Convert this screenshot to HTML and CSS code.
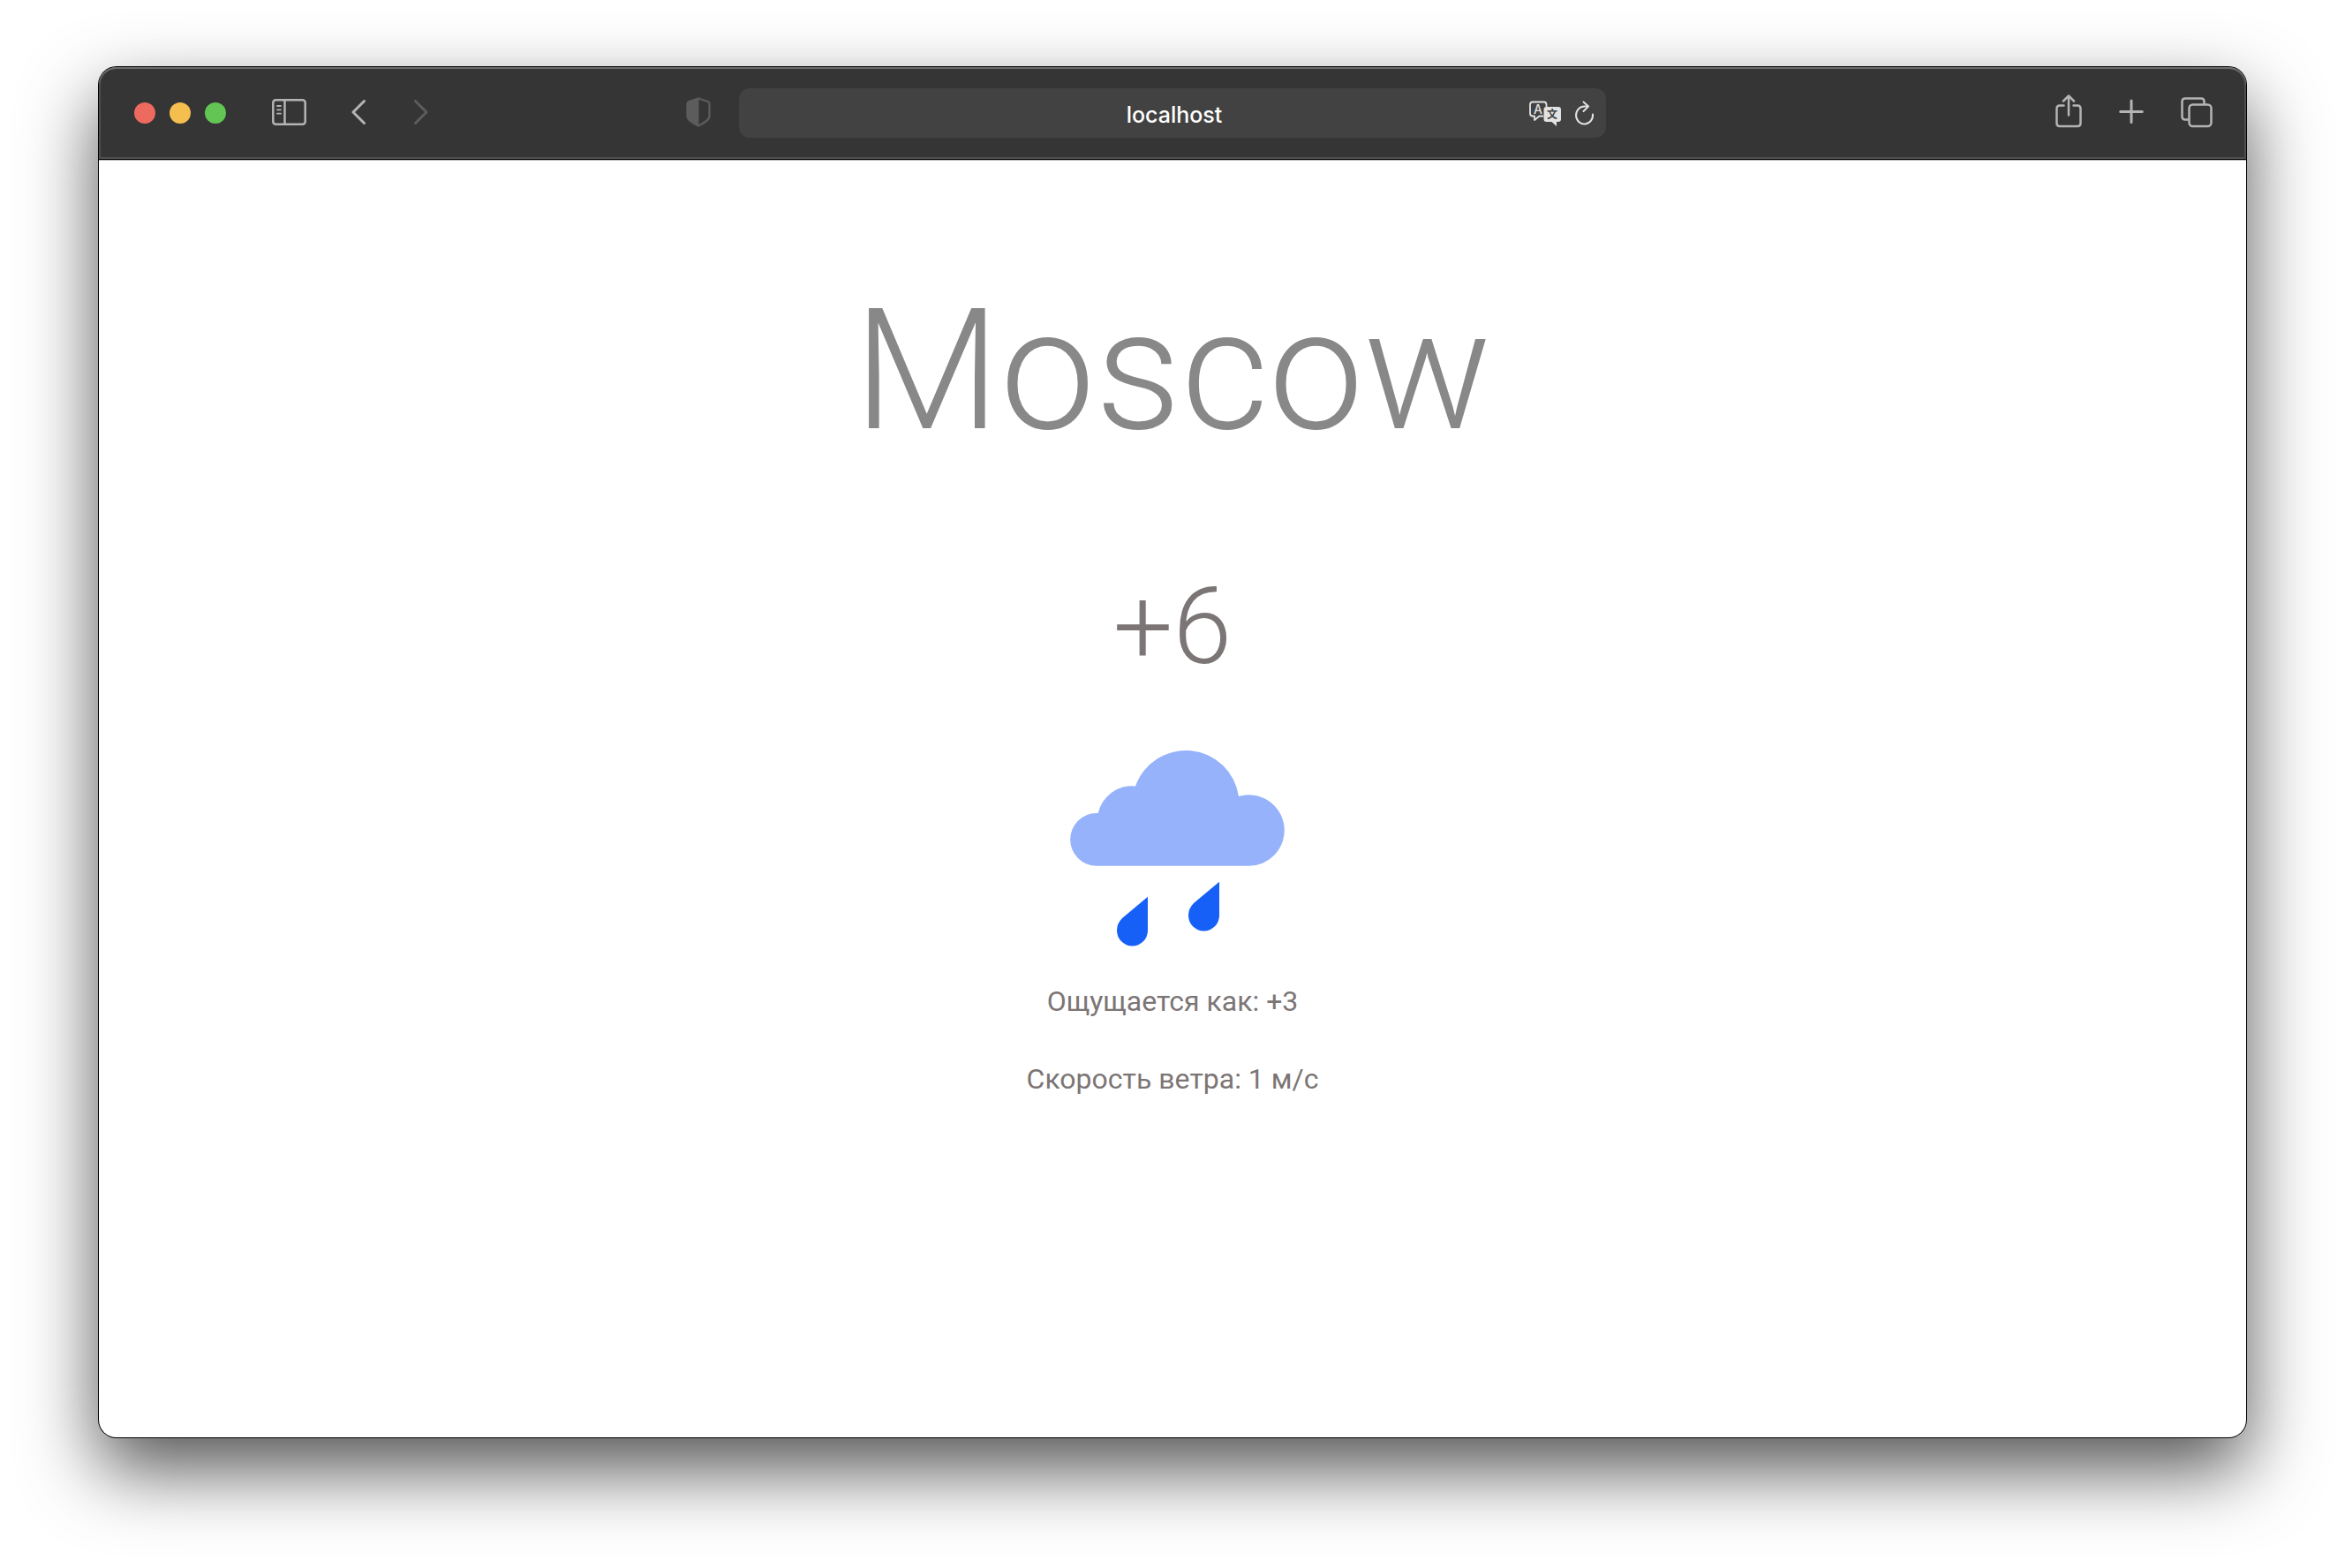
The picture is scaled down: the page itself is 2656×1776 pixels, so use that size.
FILE: index.html
```html
<!DOCTYPE html>
<html lang="ru">
<head>
  <meta charset="utf-8">
  <meta name="viewport" content="width=device-width, initial-scale=1">
  <title>localhost</title>
  <link rel="stylesheet" href="styles.css">
</head>
<body>
  <div class="window">
    <header class="toolbar">
      <div class="toolbar-start">
        <div class="lights">
          <button class="light light-close" type="button" aria-label="Close"></button>
          <button class="light light-minimize" type="button" aria-label="Minimize"></button>
          <button class="light light-zoom" type="button" aria-label="Zoom"></button>
        </div>
        <button class="tool tool-sidebar" type="button" aria-label="Sidebar">
          <svg width="40" height="32" viewBox="0 0 40 32" fill="none" stroke="currentColor" stroke-width="2.500">
            <rect x="1.300" y="2.300" width="36.400" height="27.500" rx="3"/>
            <path d="M14.500 2v28"/>
            <path d="M6 9h4M6 13.300h4M6 17.700h4" stroke-width="1.800" stroke-linecap="round"/>
          </svg>
        </button>
        <div class="history">
          <button class="tool" type="button" aria-label="Back">
            <svg width="18" height="30" viewBox="0 0 18 30" fill="none" stroke="currentColor" stroke-width="3" stroke-linecap="round" stroke-linejoin="round"><path d="M14.500 2.500L2 15l12.500 12.500"/></svg>
          </button>
          <button class="tool tool-dim" type="button" aria-label="Forward" disabled>
            <svg width="18" height="30" viewBox="0 0 18 30" fill="none" stroke="currentColor" stroke-width="3" stroke-linecap="round" stroke-linejoin="round"><path d="M2.500 2.500L15 15 2.500 27.500"/></svg>
          </button>
        </div>
        <button class="tool tool-dim tool-shield" type="button" aria-label="Privacy report">
          <svg width="28" height="34" viewBox="0 0 28 34">
            <path d="M14 1.500L3.500 5Q1.500 5.700 1.500 8v13q0 3.500 3.500 6 4 3.200 9 5.500 5-2.300 9-5.500 3.500-2.500 3.500-6V8q0-2.300-2-3z" fill="none" stroke="currentColor" stroke-width="2.300"/>
            <path d="M14.500 1.500L3.500 5Q1.500 5.700 1.500 8v13q0 3.500 3.500 6 4 3.200 9.500 5.500z" fill="currentColor"/>
          </svg>
        </button>
      </div>

      <div class="address">
        <input class="address-input" type="text" value="localhost" aria-label="Address">
        <div class="address-actions">
          <button class="tool tool-bright" type="button" aria-label="Translate">
            <svg width="38" height="30" viewBox="0 0 38 30">
              <path d="M17 18.500h-4.500L7 23v-4.500H5Q2 18.500 2 15.500V5.500Q2 2.500 5 2.500h12.500Q20.500 2.500 20.500 5.500V8" fill="none" stroke="currentColor" stroke-width="1.800" stroke-linejoin="round"/>
              <path d="M20.500 8h13.500Q37 8 37 11v11q0 3-3 3h-2v5l-5.500-5h-6q-3 0-3-3V11q0-3 3-3z" fill="currentColor"/>
              <text class="glyph-latin" x="11" y="16" text-anchor="middle">A</text>
              <text class="glyph-han" x="27" y="21" text-anchor="middle">文</text>
            </svg>
          </button>
          <button class="tool tool-bright" type="button" aria-label="Reload">
            <svg width="24" height="28" viewBox="0 0 24 28" fill="none" stroke="currentColor" stroke-width="2" stroke-linecap="round" stroke-linejoin="round">
              <path d="M21 15.500A9.500 10 0 1 1 11.500 6.500H15.500"/>
              <path d="M10.500 1.500l5.500 5-5.500 5.500"/>
            </svg>
          </button>
        </div>
      </div>

      <div class="toolbar-end">
        <button class="tool" type="button" aria-label="Share">
          <svg width="30" height="38" viewBox="0 0 30 38" fill="none" stroke="currentColor" stroke-width="2.500" stroke-linecap="round" stroke-linejoin="round">
            <path d="M9.500 12.500H5Q1.500 12.500 1.500 16v16.500Q1.500 36 5 36h20q3.500 0 3.500-3.500V16q0-3.500-3.500-3.500h-4.500"/>
            <path d="M15 23.500V2M9 7.500L15 1.500l6 6"/>
          </svg>
        </button>
        <button class="tool" type="button" aria-label="New tab">
          <svg width="28" height="38" viewBox="0 0 28 38" fill="none" stroke="currentColor" stroke-width="3" stroke-linecap="round"><path d="M14 7v24.500M1.700 19.500h24.600"/></svg>
        </button>
        <button class="tool" type="button" aria-label="Tab overview">
          <svg width="36" height="38" viewBox="0 0 36 38" fill="none" stroke="currentColor" stroke-width="2.500">
            <rect x="9.500" y="11.500" width="25" height="24.500" rx="4"/>
            <path d="M9.500 28.500H5Q1.500 28.500 1.500 25V8Q1.500 4.500 5 4.500h18q3.500 0 3.500 3.500v3.500"/>
          </svg>
        </button>
      </div>
    </header>

    <main class="weather">
      <h1 class="city">Moscow</h1>
      <h2 class="temperature">+6</h2>
      <svg class="weather-icon" width="256" height="256" viewBox="0 0 256 256" role="img" aria-label="Rain">
        <path class="cloud" d="M42 148.700A29.850 29.850 0 0 1 42 89h1.700A39.200 39.200 0 0 1 86 58.500 60.500 60.500 0 0 1 203 70 40.200 40.200 0 1 1 213.600 148.700z"/>
        <path class="drop" d="M100 183.700V222a17.500 17.500 0 0 1-35 0q0-8 6-14z"/>
        <path class="drop" d="M181 166.700V205a17.500 17.500 0 0 1-35 0q0-8 6-14z"/>
      </svg>
      <p class="detail">Ощущается как: +3</p>
      <p class="detail">Скорость ветра: 1 м/с</p>
    </main>
  </div>
</body>
</html>
```
FILE: styles.css
```css
* {
  box-sizing: border-box;
}

body {
  margin: 0;
  min-height: 100vh;
  padding: 76px 112px 148px;
  display: flex;
  background: #fff;
  font-family: Roboto, "Noto Sans", sans-serif;
}

.window {
  flex: 1;
  min-width: 0;
  display: flex;
  flex-direction: column;
  background: #fff;
  border-radius: 20px;
  box-shadow: 0 0 0 1px #000, 0 36px 84px rgba(0, 0, 0, 0.68);
}

/* Browser toolbar */

.toolbar {
  display: grid;
  grid-template-columns: 1fr minmax(0, 982px) 1fr;
  align-items: center;
  height: 105px;
  background: #353535;
  border-bottom: 1px solid #000;
  border-radius: 20px 20px 0 0;
  box-shadow: inset 0 2px 0 #6a6d6a, inset 0 0 0 2px #4f4f4f, 0 1px 0 #b8b8b8;
}

.toolbar-start,
.toolbar-end,
.lights,
.history,
.address-actions {
  display: flex;
  align-items: center;
}

.toolbar-start {
  padding: 0 32px 0 40px;
}

.toolbar-end {
  justify-content: flex-end;
  gap: 42px;
  padding: 0 38px 4px 0;
}

.lights {
  gap: 16px;
}

.light {
  width: 24px;
  height: 24px;
  padding: 0;
  border: 0;
  border-radius: 50%;
}

.light-close {
  background: #ed6a5e;
}

.light-minimize {
  background: #f5bf4f;
}

.light-zoom {
  background: #62c554;
}

.tool {
  display: flex;
  padding: 0;
  border: 0;
  background: none;
  color: #b4b4b4;
}

.tool-dim {
  color: #5c5c5c;
}

.tool-bright {
  color: #e2e2e2;
}

.tool-sidebar {
  margin-left: 52px;
}

.history {
  gap: 52px;
  margin-left: 50px;
}

.tool-sidebar,
.history,
.tool-shield {
  padding-bottom: 2px;
}

.tool-shield {
  margin-left: auto;
}

.address {
  display: flex;
  align-items: center;
  height: 56px;
  padding: 0 12px 0 92px;
  background: #424242;
  border-radius: 12px;
}

.address-input {
  flex: 1;
  min-width: 0;
  padding: 4px 0 0;
  border: 0;
  background: none;
  color: #fff;
  font: 500 25px/32px Inter, sans-serif;
  text-align: center;
}

.address-actions {
  gap: 14px;
}

.glyph-latin {
  fill: #e2e2e2;
  font: 500 14px Inter, sans-serif;
}

.glyph-han {
  fill: #424242;
  font: 700 12px "Noto Sans CJK SC", sans-serif;
}

/* Weather page */

.weather {
  display: flex;
  flex-direction: column;
  align-items: center;
  padding: 127px 24px 48px;
  color: #7c7575;
  text-align: center;
}

.city {
  margin: 0 0 106px;
  color: #888;
  font-size: 192px;
  font-weight: 300;
  line-height: 224px;
}

.temperature {
  margin: 0;
  font-size: 120px;
  font-weight: 300;
  line-height: 144px;
}

.weather-icon {
  margin: 50px 0 22px;
}

.cloud {
  fill: #95b2fb;
}

.drop {
  fill: #1660f7;
}

.detail {
  margin: 0 0 40px;
  font-size: 32px;
  line-height: 48px;
}
```
